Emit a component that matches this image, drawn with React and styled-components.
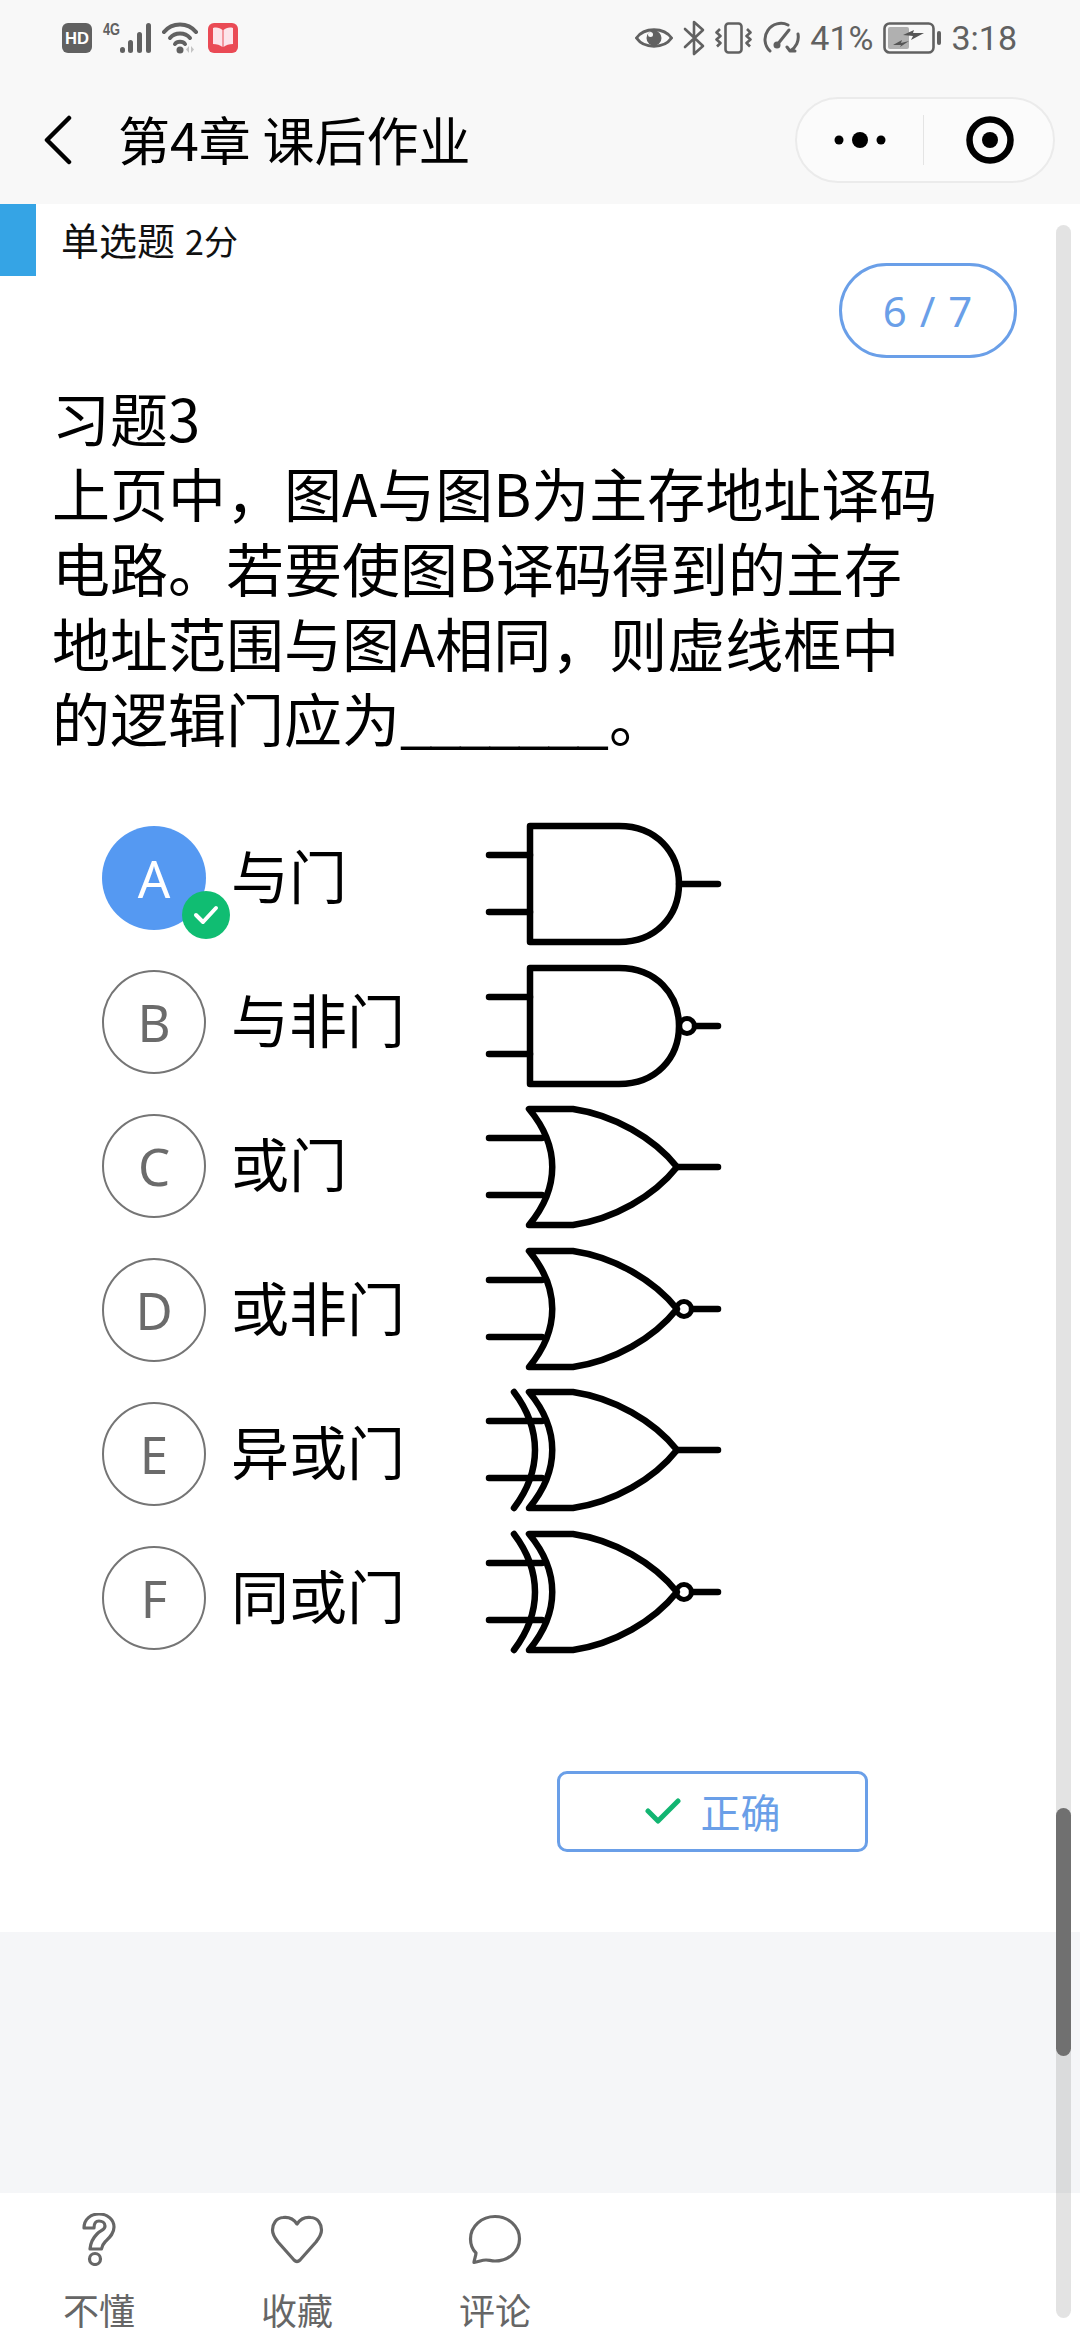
import React from 'react';
import styled, { createGlobalStyle } from 'styled-components';

const Global = createGlobalStyle`
  html, body { margin: 0; padding: 0; background: #fff; }
  * { box-sizing: border-box; }
`;
const FONT = `"Noto Sans CJK SC", "Noto Sans", sans-serif`;

const Page = styled.div`
  position: relative; width: 1080px; height: 2340px; overflow: hidden;
  display: flex; flex-direction: column; background: #f5f6f8; font-family: ${FONT};
`;
const StatusBar = styled.div`
  height: 76px; flex: none; background: #f8f8f8; padding: 0 63px 0 62px;
  display: flex; align-items: center; justify-content: space-between;
`;
const StatusGroup = styled.div`display: flex; align-items: center; gap: ${p => p.$gap}px;`;
const StatusText = styled.span`
  font-family: "Roboto", sans-serif; font-size: 34px; line-height: 40px; color: #616161;
`;
const NavBar = styled.div`
  height: 128px; flex: none; background: #f8f8f8; display: flex; align-items: center;
  padding: 0 25px 0 42px;
`;
const BackIcon = styled.svg`width: 32px; height: 50px; flex: none;`;
const NavTitle = styled.div`
  margin-left: 44px; font-size: 52px; line-height: 60px; color: #000; flex: 1; white-space: nowrap;
  position: relative; top: -1px;
`;
const Capsule = styled.div`
  width: 260px; height: 86px; border-radius: 43px; border: 2px solid #ebebeb; background: #fbfbfb;
  display: flex; align-items: center;
`;
const CapsuleCell = styled.div`
  flex: 1; display: flex; align-items: center; justify-content: center; padding-left: ${p => p.$shift || 0}px;
`;
const CapsuleDivider = styled.div`width: 1px; height: 50px; background: #e4e4e4; flex: none;`;

const Sheet = styled.div`background: #fff; padding-bottom: 80px; flex: none;`;
const SheetHead = styled.div`display: flex; align-items: flex-start; justify-content: space-between; padding-right: 63px;`;
const TypeTag = styled.div`display: flex; align-items: center; height: 72px;`;
const TypeMark = styled.div`width: 36px; height: 72px; background: #35a4e5;`;
const TypeLabel = styled.div`margin-left: 25px; font-size: 38px; line-height: 50px; color: #111;`;
const TypeScore = styled.span`font-size: 34px; margin-left: 10px;`;
const Counter = styled.div`
  margin-top: 59px; width: 178px; height: 95px; border-radius: 48px; border: 3px solid #6a9fe8;
  color: #6a9fe8; font-size: 42px; display: flex; align-items: center; justify-content: center;
  letter-spacing: 1px; font-family: "Noto Sans", sans-serif;
`;
const Question = styled.div`
  margin-top: 22px; padding: 0 52px; font-size: 58px; line-height: 75px; color: #000; white-space: nowrap;
`;
const Blank = styled.span`letter-spacing: -3px; margin-right: 3px;`;
const Options = styled.div`margin-top: 71px; display: flex; align-items: flex-start; padding-left: 102px;`;
const OptionList = styled.div`width: 382px; display: flex; flex-direction: column; gap: 40px;`;
const OptionRow = styled.div`display: flex; align-items: center; height: 104px;`;
const Letter = styled.div`
  position: relative; width: 104px; height: 104px; border-radius: 50%; flex: none;
  display: flex; align-items: center; justify-content: center; font-size: 51px;
  border: ${p => (p.$on ? 'none' : '2.5px solid #757575')};
  background: ${p => (p.$on ? '#5599f2' : '#fff')};
  color: ${p => (p.$on ? '#fff' : '#6b6b6b')};
  font-family: "Noto Sans", sans-serif;
`;
const Tick = styled.div`
  position: absolute; left: 80px; top: 65px; width: 48px; height: 48px; border-radius: 50%;
  background: #10bd72; display: flex; align-items: center; justify-content: center;
`;
const OptionLabel = styled.div`
  margin-left: 25px; font-size: 58px; line-height: 70px; color: #000; padding-bottom: 8px;
`;
const GateList = styled.div`margin-top: -6px; display: flex; flex-direction: column; gap: 11.5px;`;
const GateSvg = styled.svg`
  display: block; width: 240px; height: 130px; fill: none; stroke: #000; stroke-width: 6.5;
  stroke-linecap: round; stroke-linejoin: round;
`;
const AnswerRow = styled.div`margin-top: 113px; padding-left: 557px;`;
const AnswerBox = styled.div`
  width: 311px; height: 81px; border: 3px solid #6a9fe8; border-radius: 10px;
  display: flex; align-items: center; justify-content: center; gap: 20px;
  font-size: 40px; color: #6a9fe8;
`;
const Filler = styled.div`flex: 1;`;
const BottomBar = styled.div`height: 147px; flex: none; background: #fff; display: flex;`;
const Action = styled.div`
  width: 198px; display: flex; flex-direction: column; align-items: center; padding-top: 20px;
`;
const ActionIcon = styled.svg`
  height: 53px; width: 54px; fill: none; stroke: #666; stroke-width: 3.2; stroke-linejoin: round; stroke-linecap: round;
`;
const ActionLabel = styled.div`margin-top: 20px; font-size: 36px; line-height: 46px; color: #666;`;
const ScrollTrack = styled.div`
  position: absolute; left: 1056px; top: 225px; width: 15px; height: 2093px;
  background: rgba(0, 0, 0, 0.11); border-radius: 8px;
`;
const ScrollThumb = styled.div`
  position: absolute; left: 0; top: 1583px; width: 15px; height: 248px; border-radius: 8px; background: #707070;
`;

const G = '#616161';

const HdIcon = () => (
  <svg width="30" height="30" viewBox="0 0 30 30">
    <rect width="30" height="30" rx="6" fill={G} />
    <text x="15" y="21" textAnchor="middle" fontFamily="Liberation Sans, sans-serif" fontWeight="700" fontSize="17" textLength="24" lengthAdjust="spacingAndGlyphs" fill="#fff">HD</text>
  </svg>
);
const SignalIcon = () => (
  <svg width="50" height="32" viewBox="0 0 50 32">
    <text x="1" y="13" fontFamily="Liberation Sans, sans-serif" fontWeight="700" fontSize="16" textLength="17" lengthAdjust="spacingAndGlyphs" fill={G}>4G</text>
    <g fill={G}>
      <rect x="18" y="25" width="5" height="6" rx="2.5" />
      <rect x="26" y="18" width="5" height="13" rx="2.5" />
      <rect x="35" y="10" width="5" height="21" rx="2.5" />
      <rect x="44" y="1" width="5" height="30" rx="2.5" />
    </g>
  </svg>
);
const WifiIcon = () => (
  <svg width="36" height="32" viewBox="0 0 36 32" fill="none">
    <g stroke={G} strokeWidth="4" strokeLinecap="round">
      <path d="M2 10 C10 0 26 0 34 10" />
      <path d="M8 16 C13 10 23 10 28 16" />
      <path d="M13 22 C15 19 21 19 23 22" />
    </g>
    <circle cx="18" cy="28" r="3.5" fill={G} />
    <path d="M27 24 L27 31 L24 27.5 Z M29 24 L29 31 L32 27.5 Z" fill="#c4c4c4" />
  </svg>
);
const BookIcon = () => (
  <svg width="30" height="30" viewBox="0 0 30 30">
    <rect width="30" height="30" rx="6" fill="#ea4a55" />
    <path d="M5 5 C9 4 12 5 14.500 7 V24 C12 22 9 21 5 21 Z M25 5 C21 4 18 5 15.500 7 V24 C18 22 21 21 25 21 Z" fill="#fce4ea" />
  </svg>
);
const EyeIcon = () => (
  <svg width="38" height="24" viewBox="0 0 38 24" fill="none">
    <path d="M1.500 12 C9 1 29 1 36.500 12 C29 23 9 23 1.500 12 Z" stroke={G} strokeWidth="3" />
    <circle cx="19" cy="12" r="7.500" fill={G} />
    <circle cx="15.500" cy="8.500" r="2.500" fill="#f8f8f8" />
  </svg>
);
const BluetoothIcon = () => (
  <svg width="22" height="36" viewBox="0 0 22 36" fill="none">
    <path d="M2 9 L20 26 L11 34 V2 L20 10 L2 27" stroke={G} strokeWidth="2.600" strokeLinejoin="round" strokeLinecap="round" />
  </svg>
);
const VibrateIcon = () => (
  <svg width="37" height="32" viewBox="0 0 37 32" fill="none" stroke={G} strokeWidth="2.600" strokeLinejoin="round">
    <rect x="10.500" y="1.500" width="16" height="29" rx="3" />
    <path d="M5 7 L1.500 10.500 L5.500 14 L1.500 17.500 L5.500 21 L2 24.500" />
    <path d="M32 7 L35.500 10.500 L31.500 14 L35.500 17.500 L31.500 21 L35 24.500" />
  </svg>
);
const GaugeIcon = () => (
  <svg width="38" height="34" viewBox="0 0 38 34" fill="none" stroke={G} strokeWidth="3" strokeLinecap="round">
    <path d="M8 30 A16 16 0 0 1 26 4" />
    <path d="M15 24 L27 9" />
    <circle cx="15" cy="24" r="3.500" fill={G} stroke="none" />
    <path d="M36 13 A16 16 0 0 1 28 30 M28 30 L25 26 M28 30 L33 30" />
  </svg>
);
const BatteryIcon = () => (
  <svg width="58" height="32" viewBox="0 0 58 32" fill="none">
    <rect x="1.500" y="1.500" width="49" height="29" rx="5" stroke={G} strokeWidth="2.600" />
    <rect x="5" y="5" width="21" height="22" rx="2" fill="#b0b0b0" />
    <path d="M10 23 L19 18 L18 21 L26 19 L17 25 L18 23 Z M20 13 L31 8 L30 11 L41 11 L28 18 L30 14 Z" fill="#555" />
    <rect x="54" y="9" width="4" height="14" rx="2" fill={G} />
  </svg>
);
const DotsIcon = () => (
  <svg width="60" height="20" viewBox="0 0 60 20">
    <circle cx="9" cy="10" r="4.500" fill="#000" /><circle cx="30" cy="10" r="8" fill="#000" /><circle cx="51" cy="10" r="4.500" fill="#000" />
  </svg>
);
const TargetIcon = () => (
  <svg width="50" height="50" viewBox="0 0 50 50" fill="none">
    <circle cx="25" cy="25" r="20.500" stroke="#000" strokeWidth="6.500" /><circle cx="25" cy="25" r="8" fill="#000" />
  </svg>
);

const AND = 'M46 6 H135 C172 6 195 32 195 64 C195 96 172 122 135 122 H46 Z';
const OR = 'M45 6 H89 C130 12 170 35 193 64 C170 93 130 116 89 122 H45 C76 85 76 43 45 6 Z';
const Gate = ({ kind, inv, xor }) => {
  const isAnd = kind === 'and';
  const wire = isAnd ? 46 : 58;
  return (
    <GateSvg viewBox="0 0 240 130">
      <path d={isAnd ? AND : OR} />
      <path d={`M5 35 H${wire} M5 92 H${wire}`} />
      {xor && <path d="M30 6 C58 43 58 85 30 122" />}
      {inv ? (
        <>
          <circle cx={isAnd ? 203 : 200} cy="64" r="7.500" strokeWidth="5" />
          <path d={`M${isAnd ? 211 : 208} 64 H234`} />
        </>
      ) : (
        <path d={`M${isAnd ? 195 : 193} 64 H234`} />
      )}
    </GateSvg>
  );
};

const options = [
  ['A', '与门'], ['B', '与非门'], ['C', '或门'], ['D', '或非门'], ['E', '异或门'], ['F', '同或门'],
];
const gates = [
  { kind: 'and' }, { kind: 'and', inv: true }, { kind: 'or' }, { kind: 'or', inv: true },
  { kind: 'or', xor: true }, { kind: 'or', xor: true, inv: true },
];

export default function App() {
  return (
    <Page>
      <Global />
      <StatusBar>
        <StatusGroup $gap={10}><HdIcon /><SignalIcon /><WifiIcon /><BookIcon /></StatusGroup>
        <StatusGroup $gap={10}>
          <EyeIcon /><BluetoothIcon /><VibrateIcon /><GaugeIcon />
          <StatusText>41%</StatusText><BatteryIcon /><StatusText>3:18</StatusText>
        </StatusGroup>
      </StatusBar>
      <NavBar>
        <BackIcon viewBox="0 0 32 50" fill="none"><path d="M27 3 L5 25 L27 47" stroke="#000" strokeWidth="4.500" strokeLinecap="round" strokeLinejoin="round" /></BackIcon>
        <NavTitle>第4章 课后作业</NavTitle>
        <Capsule>
          <CapsuleCell><DotsIcon /></CapsuleCell>
          <CapsuleDivider />
          <CapsuleCell $shift={4}><TargetIcon /></CapsuleCell>
        </Capsule>
      </NavBar>
      <Sheet>
        <SheetHead>
          <TypeTag><TypeMark /><TypeLabel>单选题<TypeScore>2分</TypeScore></TypeLabel></TypeTag>
          <Counter>6 / 7</Counter>
        </SheetHead>
        <Question>
          习题3<br />
          上页中，图A与图B为主存地址译码<br />
          电路。若要使图B译码得到的主存<br />
          地址范围与图A相同，则虚线框中<br />
          的逻辑门应为<Blank>_______</Blank>。
        </Question>
        <Options>
          <OptionList>
            {options.map(([l, t], i) => (
              <OptionRow key={l}>
                <Letter $on={i === 0}>
                  {l}
                  {i === 0 && (
                    <Tick><svg width="30" height="24" viewBox="0 0 30 24" fill="none"><path d="M5 12 L12 19 L25 5" stroke="#fff" strokeWidth="4" strokeLinecap="round" strokeLinejoin="round" /></svg></Tick>
                  )}
                </Letter>
                <OptionLabel>{t}</OptionLabel>
              </OptionRow>
            ))}
          </OptionList>
          <GateList>{gates.map((g, i) => <Gate key={i} {...g} />)}</GateList>
        </Options>
        <AnswerRow>
          <AnswerBox>
            <svg width="36" height="28" viewBox="0 0 36 28" fill="none"><path d="M3 14 L13 24 L33 4" stroke="#12b572" strokeWidth="5" strokeLinecap="round" strokeLinejoin="round" /></svg>
            正确
          </AnswerBox>
        </AnswerRow>
      </Sheet>
      <Filler />
      <BottomBar>
        <Action>
          <ActionIcon viewBox="0 0 54 53"><path d="M12 15 C12 6 19 1 27 1 C36 1 42 7 42 14 C42 21 37 25 33 29 C31 31 30 33 29.500 36 H18 C18.500 30 21 25 25 21 C29 17 33 17 33 13 C33 10 30 8 27 8 C24 8 22 10 22 15 Z" /><circle cx="23" cy="46" r="5.500" /></ActionIcon>
          <ActionLabel>不懂</ActionLabel>
        </Action>
        <Action>
          <ActionIcon viewBox="0 0 54 53"><path d="M27 11 C23 5 17 4 13 4.500 C6 5 2.500 11 2.500 17 C2.500 22 5 25 8 29 L24 47 C26 49 28 49 30 47 L46 29 C49 25 51.500 22 51.500 17 C51.500 11 48 5 41 4.500 C37 4 31 5 27 11 Z" /></ActionIcon>
          <ActionLabel>收藏</ActionLabel>
        </Action>
        <Action>
          <ActionIcon viewBox="0 0 54 53"><path d="M27 3.500 C40 3.500 51.500 13 51.500 26 C51.500 39 40 48 27 48 C23 48 21 47 18 47 C14 47 10 49 6 49.500 C6 47 8 43 8 40 C4 36 2.500 31 2.500 26 C2.500 13 14 3.500 27 3.500 Z" /></ActionIcon>
          <ActionLabel>评论</ActionLabel>
        </Action>
      </BottomBar>
      <ScrollTrack><ScrollThumb /></ScrollTrack>
    </Page>
  );
}
